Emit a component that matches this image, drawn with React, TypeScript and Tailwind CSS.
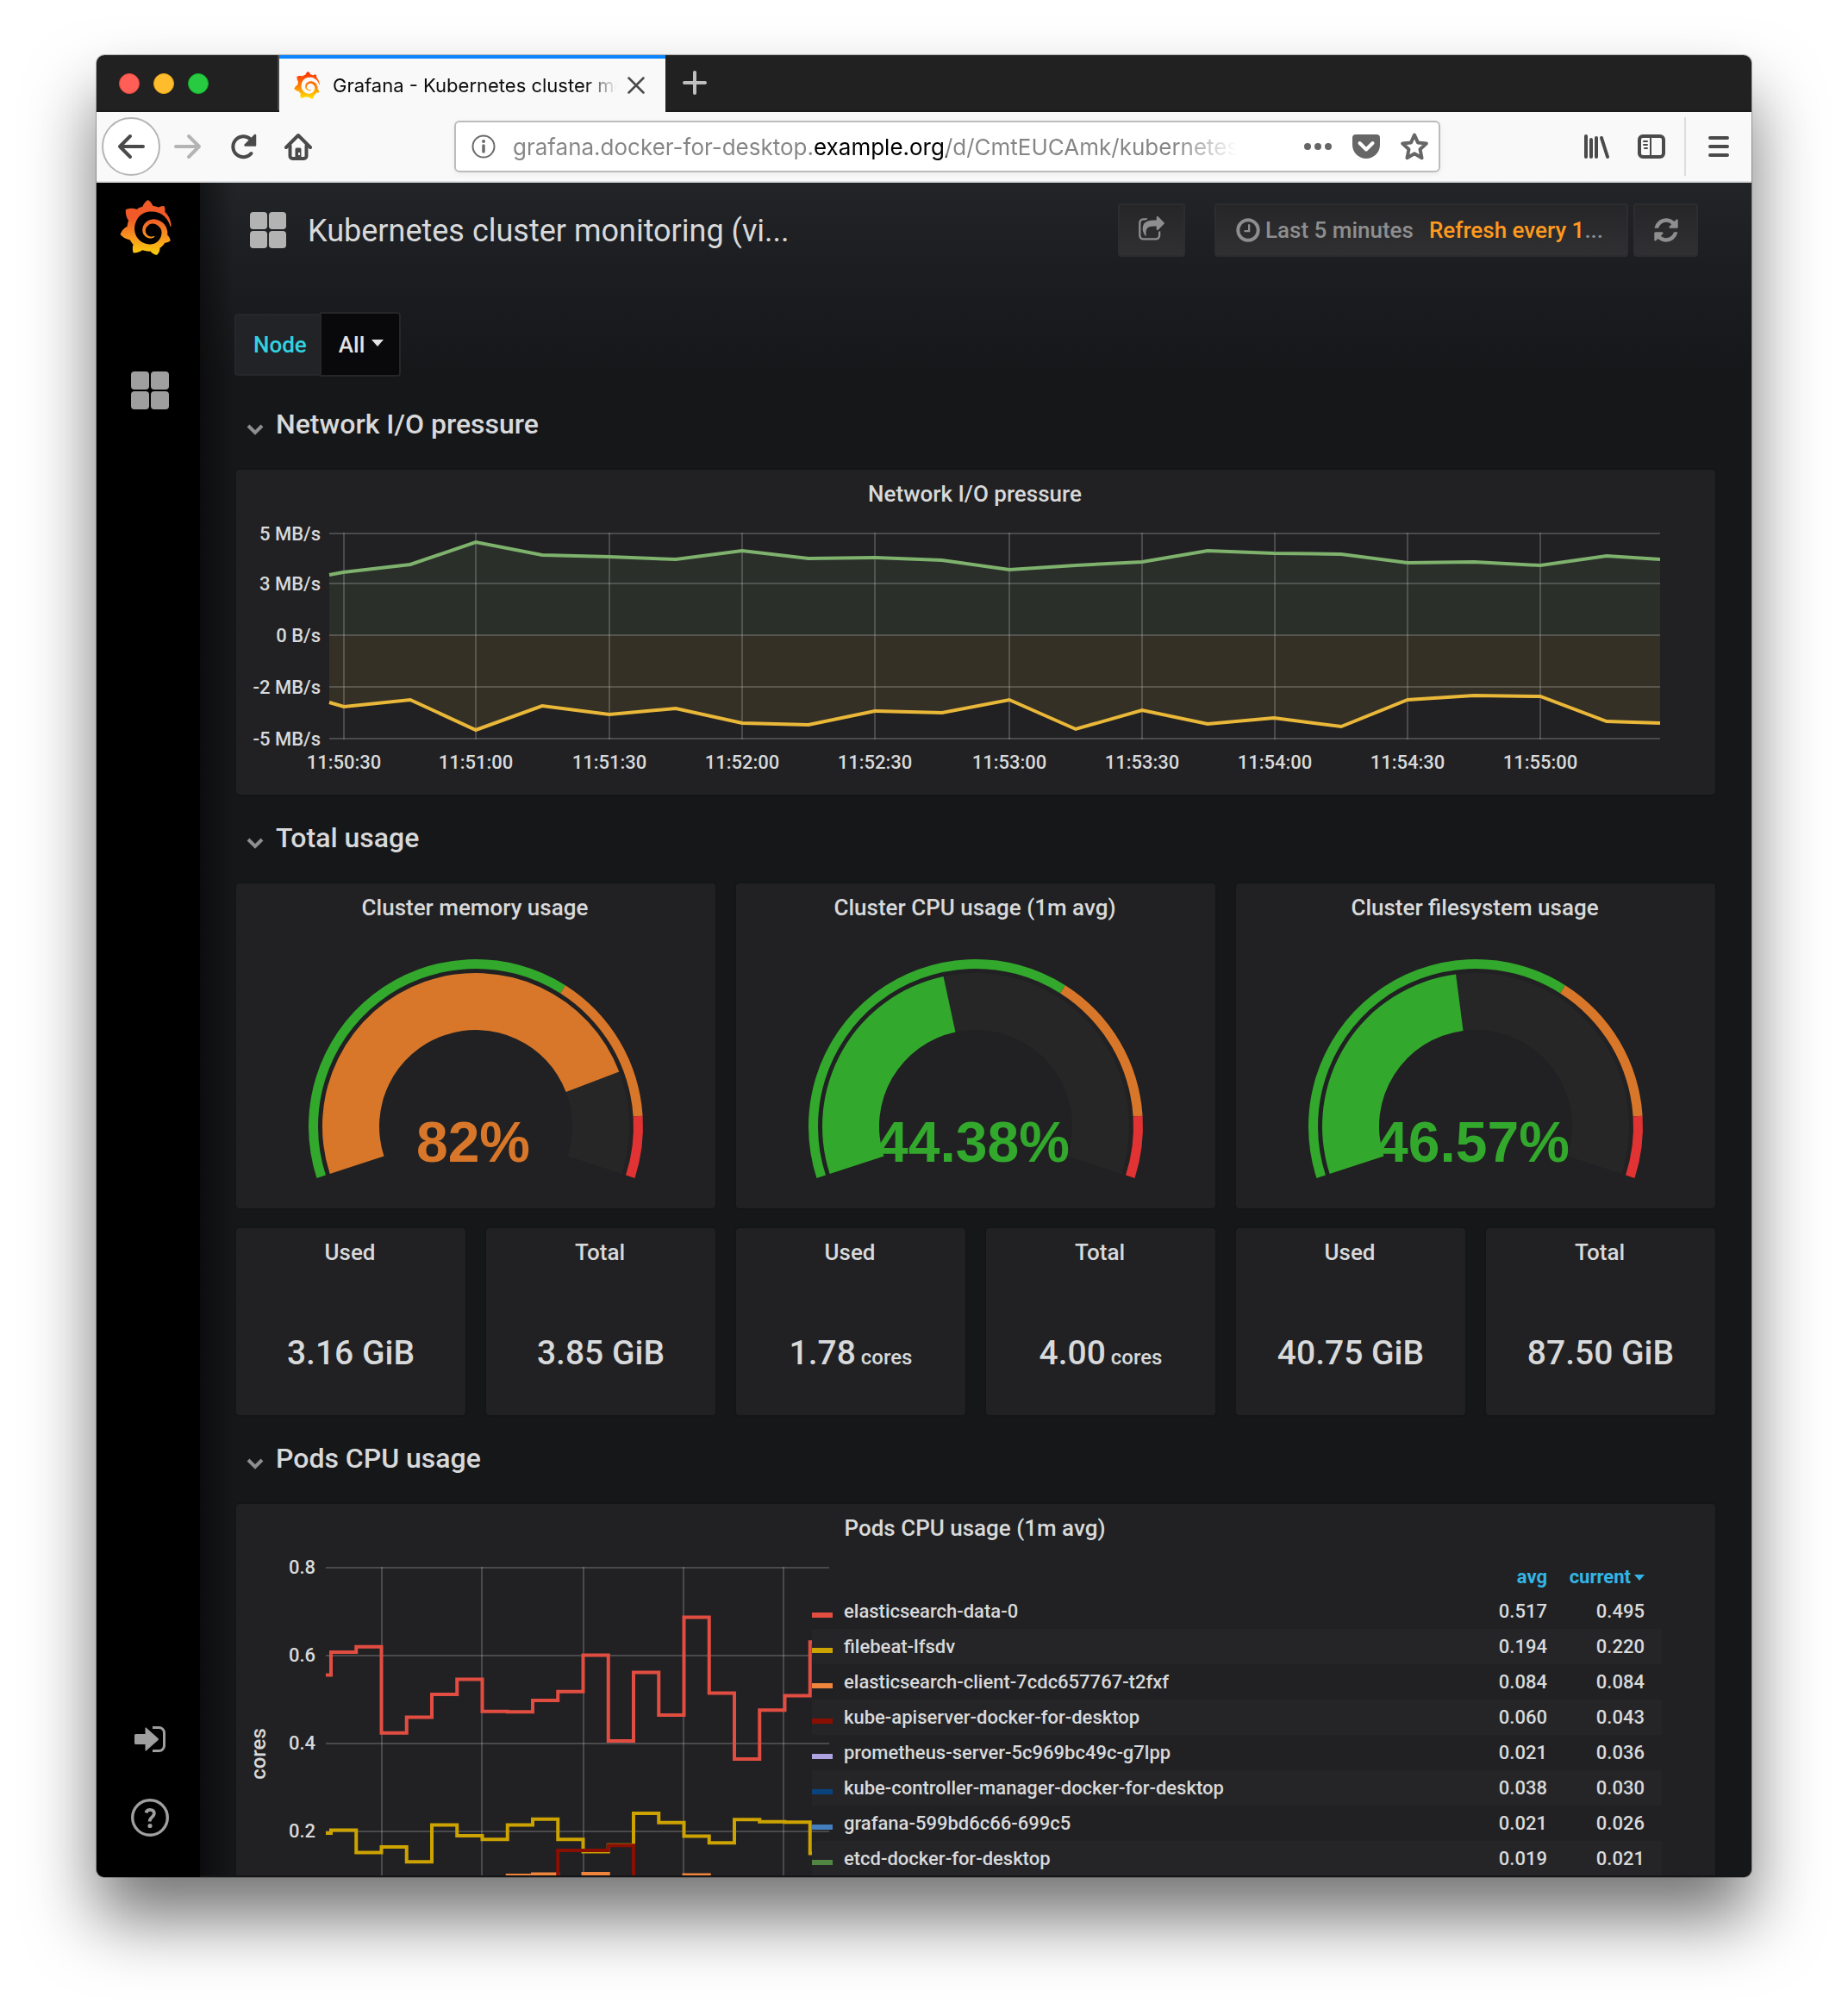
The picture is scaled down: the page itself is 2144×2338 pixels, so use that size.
import React from 'react';
import { SiGrafana } from 'react-icons/si';

const FONT = "font-['Roboto','Liberation_Sans',sans-serif]";

/* ---------- shared drawings ---------- */

function GrafanaLogo({ id, stops, className }: { id: string; stops: string[]; className: string }) {
  return (
    <span className="flex">
      <svg width="0" height="0" aria-hidden="true">
        <defs>
          <linearGradient id={id} x1="0" y1="0" x2="0" y2="1">
            {stops.map((c, i) => (
              <stop key={i} offset={i / (stops.length - 1)} stopColor={c} />
            ))}
          </linearGradient>
        </defs>
      </svg>
      <SiGrafana className={className} fill={`url(#${id})`} aria-hidden="true" />
    </span>
  );
}

function DashboardGrid({ className }: { className: string }) {
  return (
    <svg viewBox="0 0 44 44" className={className} fill="currentColor" aria-hidden="true">
      <rect x="0" y="0" width="21" height="21" rx="4" />
      <rect x="23" y="0" width="21" height="21" rx="4" />
      <rect x="0" y="23" width="21" height="21" rx="4" />
      <rect x="23" y="23" width="21" height="21" rx="4" />
    </svg>
  );
}

const ICONS = {
  refresh:
    'M1639 1056q0 5-1 7-64 268-268 434.5t-478 166.5q-146 0-282.5-55t-243.5-157l-129 129q-19 19-45 19t-45-19-19-45v-448q0-26 19-45t45-19h448q26 0 45 19t19 45-19 45l-137 137q71 66 161 102t187 36q134 0 250-65t186-179q11-17 53-117 8-23 30-23h192q13 0 22.5 9.5t9.5 22.5zm25-800v448q0 26-19 45t-45 19h-448q-26 0-45-19t-19-45 19-45l138-138q-148-137-349-137-134 0-250 65t-186 179q-11 17-53 117-8 23-30 23h-199q-13 0-22.5-9.5t-9.5-22.5v-7q65-268 270-434.5t480-166.5q146 0 284 55.5t245 156.5l130-129q19-19 45-19t45 19 19 45z',
  clock:
    'M1024 544v448q0 14-9 23t-23 9h-320q-14 0-23-9t-9-23v-64q0-14 9-23t23-9h224v-352q0-14 9-23t23-9h64q14 0 23 9t9 23zm416 352q0-148-73-273t-198-198-273-73-273 73-198 198-73 273 73 273 198 198 273 73 273-73 198-198 73-273zm224 0q0 209-103 385.5t-279.5 279.5-385.5 103-385.5-103-279.5-279.5-103-385.5 103-385.5 279.5-279.5 385.5-103 385.5 103 279.5 279.5 103 385.5z',
  share:
    'M1472 989v259q0 119-84.5 203.5t-203.5 84.5h-832q-119 0-203.5-84.5t-84.5-203.5v-832q0-119 84.5-203.5t203.5-84.5h255q13 0 22.5 9.5t9.5 22.5q0 27-26 32-77 26-133 60-10 4-16 4h-112q-66 0-113 47t-47 113v832q0 66 47 113t113 47h832q66 0 113-47t47-113v-214q0-19 18-29 28-13 54-37 16-16 35-8 21 9 21 29zm237-496l-384 384q-18 19-45 19-12 0-25-5-39-17-39-59v-192h-160q-323 0-438 131-119 137-74 473 3 23-20 34-8 2-12 2-16 0-26-13-10-14-21-31t-39.5-68.5-49.5-99.5-38.5-114-17.5-122q0-49 3.5-91t14-90 28-88 47-81.5 68.5-74 94.5-61.5 124.5-48.5 159.5-30.5 196.5-11h160v-192q0-42 39-59 13-5 25-5 26 0 45 19l384 384q19 19 19 45t-19 45z',
};

function Glyph({ name, className }: { name: keyof typeof ICONS; className: string }) {
  return (
    <svg viewBox="0 0 1792 1792" className={className} fill="currentColor" aria-hidden="true">
      <path d={ICONS[name]} />
    </svg>
  );
}

/* ---------- browser chrome ---------- */

function TabStrip() {
  return (
    <div className="flex h-[66px] shrink-0 border-b-2 border-[#1a1a1a] bg-[#212121]">
      <div className="flex w-[212px] items-center gap-4 border-r-2 border-[#4a4a4b] pl-[26px] pt-0.5">
        <button aria-label="Close window" className="size-6 rounded-full border border-[#e2463f] bg-[#ff5f57]" />
        <button aria-label="Minimize window" className="size-6 rounded-full border border-[#e1a116] bg-[#ffbd2e]" />
        <button aria-label="Zoom window" className="size-6 rounded-full border border-[#12ac28] bg-[#28ca42]" />
      </div>
      <div className="-mb-0.5 flex w-[448px] items-center border-t-4 border-[#0a84ff] bg-[#f9f9fa] pl-4 pr-6">
        <GrafanaLogo id="tabLogo" stops={['#ff2a05', '#ff7a00', '#ffe600']} className="size-8" />
        <span className="ml-3.5 mr-[9px] flex-1 overflow-hidden whitespace-nowrap font-['Inter',sans-serif] text-[22px] leading-8 text-[#0c0c0d] [mask-image:linear-gradient(to_right,black_88%,transparent_99%)]">
          Grafana - Kubernetes cluster mo
        </span>
        <button aria-label="Close tab">
          <svg viewBox="0 0 20 20" className="size-5" stroke="#4a4a4b" strokeWidth="2.5" strokeLinecap="round">
            <path d="M1.5 1.5 18.5 18.5M18.5 1.5 1.5 18.5" />
          </svg>
        </button>
      </div>
      <button aria-label="New tab" className="ml-5 flex w-7 items-center justify-center">
        <svg viewBox="0 0 28 28" className="size-7" stroke="#bfbfc0" strokeWidth="4" strokeLinecap="round">
          <path d="M14 2v24M2 14h24" />
        </svg>
      </button>
    </div>
  );
}

function ToolButton({ label, children }: { label: string; children: React.ReactNode }) {
  return (
    <button aria-label={label} className="flex h-[68px] w-16 shrink-0 items-center justify-center">
      {children}
    </button>
  );
}

function NavBar() {
  return (
    <div className="flex h-[82px] shrink-0 items-center border-b-2 border-[#dcdddf] bg-[#f9f9fa] pl-1.5 text-[#4a4a4b]">
      <button
        aria-label="Back"
        className="flex size-[68px] shrink-0 items-center justify-center rounded-full border-2 border-[#b5b5b6] bg-white"
      >
        <svg viewBox="0 0 32 32" className="size-8" fill="none" stroke="currentColor" strokeWidth="4" strokeLinecap="round" strokeLinejoin="round">
          <path d="M15 4 3 16l12 12M3 16h27" />
        </svg>
      </button>
      <ToolButton label="Forward">
        <svg viewBox="0 0 32 32" className="size-8" fill="none" stroke="#b4b4b5" strokeWidth="4" strokeLinecap="round" strokeLinejoin="round">
          <path d="M17 4l12 12-12 12M29 16H2" />
        </svg>
      </ToolButton>
      <ToolButton label="Reload">
        <svg viewBox="0 0 32 32" className="size-8" fill="none" stroke="currentColor" strokeWidth="4" strokeLinecap="round" strokeLinejoin="round">
          <path d="M25.5 24A12 12 0 1 1 24.5 7.5L28 11" />
          <path d="M30 3v11.500h-11.500z" fill="currentColor" strokeWidth="2.500" />
        </svg>
      </ToolButton>
      <ToolButton label="Home">
        <svg viewBox="0 0 32 32" className="size-8" fill="none" stroke="currentColor" strokeWidth="4" strokeLinecap="round" strokeLinejoin="round">
          <path d="M2 17 16 3l14 14" />
          <path d="M6.500 15v12a3 3 0 0 0 3 3h13a3 3 0 0 0 3-3V15" />
          <path d="M12.500 30V19a1.500 1.500 0 0 1 1.500-1.500h4a1.500 1.500 0 0 1 1.500 1.500V30z" fill="currentColor" stroke="none" />
          <rect x="16" y="23" width="2" height="3" fill="#f9f9fa" stroke="none" />
        </svg>
      </ToolButton>

      <div className="ml-[149px] mr-[149px] flex h-[60px] min-w-0 flex-1 items-center rounded-md border-2 border-[#bcbcbd] bg-white pl-[18px] pr-3 text-[#666667] shadow-[0_2px_6px_rgba(0,0,0,0.06)]">
        <button aria-label="Site information">
          <svg viewBox="0 0 28 28" className="size-7" fill="none" stroke="#6b6b6c" strokeWidth="2">
            <circle cx="14" cy="14" r="12.500" />
            <path d="M14 13v7" strokeWidth="3.500" strokeLinecap="round" />
            <circle cx="14" cy="8" r="2" fill="#6b6b6c" stroke="none" />
          </svg>
        </button>
        <input
          aria-label="Address"
          readOnly
          value="grafana.docker-for-desktop.example.org/d/CmtEUCAmk/kubernetes"
          className="ml-5 mr-[72px] h-14 min-w-0 flex-1 bg-[linear-gradient(to_right,#858585_348px,#000_348px,#000_503px,#858585_503px,#858585_770px,transparent_840px)] bg-clip-text font-['Inter',sans-serif] text-[26px] text-transparent outline-none"
        />
        <div className="flex items-center gap-6">
          <button aria-label="Page actions">
            <svg viewBox="0 0 32 32" className="size-8" fill="currentColor">
              <circle cx="4" cy="16" r="4" />
              <circle cx="16" cy="16" r="4" />
              <circle cx="28" cy="16" r="4" />
            </svg>
          </button>
          <button aria-label="Save to Pocket">
            <svg viewBox="0 0 32 32" className="size-8">
              <path d="M4 2h24a4 4 0 0 1 4 4v8a16 16 0 0 1-32 0V6a4 4 0 0 1 4-4z" fill="currentColor" />
              <path d="M8.500 12l7.500 7.500 7.500-7.500" fill="none" stroke="#fff" strokeWidth="4" strokeLinecap="round" strokeLinejoin="round" />
            </svg>
          </button>
          <button aria-label="Bookmark this page">
            <svg viewBox="0 0 32 32" className="size-8" fill="none" stroke="currentColor" strokeWidth="4" strokeLinejoin="round">
              <path d="M16 2.500l4 9 9.800 1-7.300 6.700 2 10L16 24.200l-8.500 5 2-10L2.200 12.500l9.800-1z" />
            </svg>
          </button>
        </div>
      </div>

      <ToolButton label="Library">
        <svg viewBox="0 0 32 32" className="size-8" fill="none" stroke="currentColor" strokeWidth="4" strokeLinecap="round">
          <path d="M4 4v24M10 8v20M16 6v22M22 6l7 22" />
        </svg>
      </ToolButton>
      <ToolButton label="Sidebars">
        <svg viewBox="0 0 32 32" className="size-8" fill="none" stroke="currentColor" strokeLinecap="round">
          <rect x="2" y="4" width="28" height="24" rx="4" strokeWidth="4" />
          <path d="M15 5v22M7 10h4M7 14h4M8 18h3" strokeWidth="2" />
        </svg>
      </ToolButton>
      <div className="ml-1.5 h-[68px] w-0.5 shrink-0 bg-[#dcdddf]" />
      <button aria-label="Open menu" className="flex h-[68px] w-[76px] shrink-0 items-center justify-center">
        <svg viewBox="0 0 24 24" className="size-6" stroke="currentColor" strokeWidth="4" strokeLinecap="round">
          <path d="M2 2h20M2 12h20M2 22h20" />
        </svg>
      </button>
    </div>
  );
}

/* ---------- Grafana side menu and header ---------- */

function SideMenu() {
  return (
    <nav className="flex w-[120px] shrink-0 flex-col items-center bg-black pb-[47px] pt-5 text-[#9f9f9f]">
      <a href="#home" aria-label="Grafana home" className="-ml-1.5">
        <GrafanaLogo id="menuLogo" stops={['#f05a28', '#f05a28', '#f7941e', '#fcd00b']} className="size-16" />
      </a>
      <a href="#dashboards" aria-label="Dashboards" className="ml-1 mt-[135px]">
        <DashboardGrid className="size-11" />
      </a>
      <div className="flex-1" />
      <a href="#login" aria-label="Sign in" className="ml-1">
        <svg viewBox="0 0 36 30" className="h-[30px] w-9">
          <path d="M1.500 9H12.500V2.500q0-2 1.500-.5L27.500 14q1 1 0 2L14 28q-1.500 1.500-1.500-.5V21H1.500Q0 21 0 19.500v-9Q0 9 1.500 9z" fill="currentColor" />
          <path d="M21 1.500h7.500a6 6 0 0 1 6 6v15a6 6 0 0 1-6 6H21" fill="none" stroke="currentColor" strokeWidth="3" />
        </svg>
      </a>
      <a href="#help" aria-label="Help" className="ml-1 mt-[54px]">
        <svg viewBox="0 0 44 44" className="size-11" fill="none" stroke="currentColor">
          <circle cx="22" cy="22" r="20.300" strokeWidth="3.400" />
          <path d="M17.500 16.500c.5-2.400 2.400-3.600 4.700-3.600 2.700 0 4.700 1.500 4.700 4.200 0 4.600-5.400 4-5.200 9.400" strokeWidth="3.800" />
          <circle cx="22" cy="31.500" r="2.600" fill="currentColor" stroke="none" />
        </svg>
      </a>
    </nav>
  );
}

function Toolbar() {
  const btn =
    'flex h-[62px] items-center justify-center rounded-sm border-2 border-[#2d2d30] bg-linear-to-b from-[#262628] to-[#303032] text-[#8e8e8e]';
  return (
    <header className="flex items-center pl-[58px] pr-[62px] pt-6">
      <DashboardGrid className="size-[42px] shrink-0 text-[#b3b3b3]" />
      <h1 className="ml-[25px] w-[560px] shrink-0 truncate pt-0.5 text-[36px] leading-[48px] text-[#d8d9da]">
        Kubernetes cluster monitoring (vi...
      </h1>
      <div className="ml-auto flex">
        <button aria-label="Share dashboard" className={`${btn} w-[78px]`}>
          <Glyph name="share" className="size-8" />
        </button>
        <button className={`${btn} ml-[34px] w-[480px] pr-1.5 text-[26px] font-medium leading-9`}>
          <Glyph name="clock" className="size-8" />
          <span className="ml-1">Last 5 minutes</span>
          <span className="ml-[18px] text-[#ff9a1f]">
            Refresh every 1<span className="text-[#8e8e8e]">...</span>
          </span>
        </button>
        <button aria-label="Refresh dashboard" className={`${btn} ml-1.5 w-[75px]`}>
          <Glyph name="refresh" className="size-8" />
        </button>
      </div>
    </header>
  );
}

function Variables() {
  return (
    <div className="mt-16 flex items-center pl-10 text-[26px] font-medium leading-9">
      <label
        htmlFor="node"
        className="flex h-[72px] items-center rounded-l-sm border-2 border-r-0 border-[#25272a] bg-[#212326] pl-5 pr-[15px] text-[#33d2e0]"
      >
        Node
      </label>
      <div className="relative">
        <select
          id="node"
          className="h-[75px] w-[94px] appearance-none rounded-r-sm border-2 border-[#262628] bg-[#09090b] pl-5 pr-8 font-medium text-[#e3e3e3] outline-none"
        >
          <option>All</option>
        </select>
        <span className="pointer-events-none absolute right-5 top-8 border-x-[7px] border-t-8 border-x-transparent border-t-[#e3e3e3]" />
      </div>
    </div>
  );
}

/* ---------- dashboard pieces ---------- */

function RowTitle({ children }: { children: React.ReactNode }) {
  return (
    <h2 className="h-[103px] pt-[30px] text-[32px] font-medium leading-10 text-[#d8d9da]">
      <button className="flex items-center pl-3">
        <svg viewBox="0 0 20 14" className="mt-3.5 h-3.5 w-5" fill="none" stroke="#8e8e8e" strokeWidth="4">
          <path d="M2 2l8 8 8-8" />
        </svg>
        <span className="ml-3.5">{children}</span>
      </button>
    </h2>
  );
}

function Panel({ title, className, children }: { title: string; className: string; children: React.ReactNode }) {
  return (
    <section className={`flex flex-col rounded-sm bg-[#212123] shadow-[0_0_0_2px_#141517] ${className}`}>
      <h3 className="h-12 shrink-0 pr-0.5 pt-2.5 text-center text-[26px] font-medium leading-9 text-[#d8d9da]">{title}</h3>
      {children}
    </section>
  );
}

const NET_IN = [
  [108, 122], [124, 119], [202, 110], [278, 84], [355, 99], [433, 101], [510, 104], [587, 94], [664, 103], [741, 102],
  [819, 105], [897, 116], [974, 111], [1051, 107], [1127, 94], [1204, 97], [1282, 98], [1359, 108], [1436, 107],
  [1513, 111], [1590, 100], [1652, 104],
];
const NET_OUT = [
  [108, 270], [125, 275], [202, 267], [278, 302], [355, 274], [433, 284], [510, 277], [587, 294], [664, 296],
  [741, 280], [819, 282], [897, 267], [974, 301], [1051, 279], [1127, 295], [1204, 288], [1282, 298], [1359, 267],
  [1436, 262], [1513, 263], [1590, 292], [1652, 294],
];
const NET_Y: [number, string][] = [
  [74, '5 MB/s'], [132, '3 MB/s'], [192, '0 B/s'], [252, '-2 MB/s'], [312, '-5 MB/s'],
];
const NET_X: [number, string][] = [
  [125, '11:50:30'], [278, '11:51:00'], [433, '11:51:30'], [587, '11:52:00'], [741, '11:52:30'],
  [897, '11:53:00'], [1051, '11:53:30'], [1205, '11:54:00'], [1359, '11:54:30'], [1513, '11:55:00'],
];
const toPoints = (p: number[][]) => p.map((q) => q.join(',')).join(' ');

function NetworkChart() {
  return (
    <svg viewBox="0 48 1716 329" className="w-full" role="img" aria-label="Network I/O pressure">
      <polygon points={`108,192 ${toPoints(NET_IN)} 1652,192`} fill="#7eb26d" fillOpacity="0.1" />
      <polygon points={`108,192 ${toPoints(NET_OUT)} 1652,192`} fill="#eab839" fillOpacity="0.1" />
      <g stroke="#c8c8c8" strokeOpacity="0.25" strokeWidth="2">
        {NET_Y.map(([y]) => (
          <path key={y} d={`M108 ${y}H1652`} />
        ))}
        {NET_X.map(([x]) => (
          <path key={x} d={`M${x} 73V313`} />
        ))}
      </g>
      <polyline points={toPoints(NET_IN)} fill="none" stroke="#7eb26d" strokeWidth="4" />
      <polyline points={toPoints(NET_OUT)} fill="none" stroke="#eab839" strokeWidth="4" />
      <g fill="#d8d9da" fontSize="22" fontWeight="500">
        {NET_Y.map(([y, t]) => (
          <text key={t} x="98" y={y + 8} textAnchor="end">{t}</text>
        ))}
        {NET_X.map(([x, t]) => (
          <text key={t} x={x} y="347" textAnchor="middle">{t}</text>
        ))}
      </g>
    </svg>
  );
}

const GREEN = '#32a82c';
const ORANGE = '#d87729';
const RED = '#e23334';

function ring(from: number, to: number, outer: number, inner: number) {
  const at = (f: number, r: number) => {
    const a = ((198 - 216 * f) * Math.PI) / 180;
    return `${(278 + r * Math.cos(a)).toFixed(2)} ${(282 - r * Math.sin(a)).toFixed(2)}`;
  };
  const large = (to - from) * 216 > 180 ? 1 : 0;
  return `M${at(from, outer)}A${outer} ${outer} 0 ${large} 1 ${at(to, outer)}L${at(to, inner)}A${inner} ${inner} 0 ${large} 0 ${at(from, inner)}Z`;
}

function Gauge({ value, label, color }: { value: number; label: string; color: string }) {
  return (
    <svg viewBox="0 48 556 329" className="w-full" role="img" aria-label={label}>
      <path d={ring(0, 1, 178, 112)} fill="#262626" />
      <path d={ring(0, value / 100, 178, 112)} fill={color} />
      <path d={ring(0, 0.65, 194, 183)} fill={GREEN} />
      <path d={ring(0.65, 0.9, 194, 183)} fill={ORANGE} />
      <path d={ring(0.9, 1, 194, 183)} fill={RED} />
      <text x="275" y="323" textAnchor="middle" fontSize="66" fontWeight="700" fill={color} className="font-['Liberation_Sans',sans-serif]">
        {label}
      </text>
    </svg>
  );
}

function Stat({ title, value, unit }: { title: string; value: string; unit?: string }) {
  return (
    <Panel title={title} className="h-[217px]">
      <p className="pt-[69px] text-center text-[39px] font-medium leading-[56px] text-[#d8d9da]">
        {value}
        {unit && <span className="text-[24px]"> {unit}</span>}
      </p>
    </Panel>
  );
}

const CPU_ES = [
  0.556, 0.608, 0.62, 0.424, 0.46, 0.512, 0.546, 0.473, 0.472, 0.498, 0.518, 0.601, 0.406, 0.562, 0.465, 0.687, 0.515,
  0.365, 0.476, 0.509, 0.631,
];
const CPU_FILEBEAT = [
  0.196, 0.203, 0.152, 0.165, 0.131, 0.215, 0.19, 0.182, 0.215, 0.228, 0.182, 0.154, 0.169, 0.241, 0.22, 0.189, 0.174,
  0.227, 0.222, 0.221, 0.15,
];
const CPU_CLIENT = [
  0.084, 0.084, 0.084, 0.084, 0.084, 0.084, 0.084, 0.084, 0.1, 0.103, 0.084, 0.104, 0.084, 0.084, 0.084, 0.101, 0.084,
  0.084, 0.084, 0.084, 0.084,
];
const CPU_API = [
  0.06, 0.06, 0.06, 0.06, 0.06, 0.06, 0.06, 0.06, 0.06, 0.06, 0.157, 0.157, 0.168, 0.06, 0.06, 0.06, 0.06, 0.06, 0.06,
  0.06, 0.06,
];

/* 510 units per core, 0.8 at the top gridline */
const cpuY = (v: number) => 74 + (0.8 - v) * 510;

function stepPath(values: number[]) {
  return values
    .map((v, i) => {
      const start = i === 0 ? 104 : 110 + 29.25 * (i - 1);
      const end = i === values.length - 1 ? 668 : 110 + 29.25 * i;
      return `${i === 0 ? 'M' : 'L'}${start} ${cpuY(v).toFixed(1)}H${end}`;
    })
    .join('');
}

function CpuChart() {
  return (
    <svg viewBox="0 48 668 450" className="w-full overflow-visible" role="img" aria-label="Pods CPU usage">
      <defs>
        <clipPath id="cpuPlot">
          <rect x="104" y="60" width="564" height="430" />
        </clipPath>
      </defs>
      <g stroke="#c8c8c8" strokeOpacity="0.25" strokeWidth="2">
        {[0.8, 0.6, 0.4, 0.2].map((v) => (
          <path key={v} d={`M104 ${Math.round(cpuY(v))}H688`} />
        ))}
        {[169, 285, 403, 519, 635].map((x) => (
          <path key={x} d={`M${x} 73V482`} />
        ))}
      </g>
      <g fill="none" strokeWidth="4" clipPath="url(#cpuPlot)">
        <path d={stepPath(CPU_ES)} stroke="#e24d42" />
        <path d={stepPath(CPU_FILEBEAT)} stroke="#cca300" />
        <path d={stepPath(CPU_CLIENT)} stroke="#ef843c" />
        <path d={stepPath(CPU_API)} stroke="#890f02" />
      </g>
      <g fill="#d8d9da" fontSize="22" fontWeight="500">
        {[0.8, 0.6, 0.4, 0.2].map((v) => (
          <text key={v} x="92" y={Math.round(cpuY(v)) + 7} textAnchor="end">{v}</text>
        ))}
        <text transform="translate(34 290) rotate(-90)" textAnchor="middle" fontSize="24">cores</text>
      </g>
    </svg>
  );
}

const PODS: [string, string, string, string][] = [
  ['elasticsearch-data-0', '0.517', '0.495', 'bg-[#e24d42]'],
  ['filebeat-lfsdv', '0.194', '0.220', 'bg-[#cca300]'],
  ['elasticsearch-client-7cdc657767-t2fxf', '0.084', '0.084', 'bg-[#ef843c]'],
  ['kube-apiserver-docker-for-desktop', '0.060', '0.043', 'bg-[#890f02]'],
  ['prometheus-server-5c969bc49c-g7lpp', '0.021', '0.036', 'bg-[#aea2e0]'],
  ['kube-controller-manager-docker-for-desktop', '0.038', '0.030', 'bg-[#0a437c]'],
  ['grafana-599bd6c66-699c5', '0.021', '0.026', 'bg-[#447ebc]'],
  ['etcd-docker-for-desktop', '0.019', '0.021', 'bg-[#508642]'],
];

function PodLegend() {
  return (
    <table className="relative mt-4 w-full text-[22px] font-medium leading-8 text-[#d8d9da]">
      <thead>
        <tr className="h-10 text-[#33b5e5]">
          <th colSpan={2} aria-label="Pod" />
          <th className="p-0 pt-0.5 text-right font-bold">
            <button>avg</button>
          </th>
          <th className="w-[133px] p-0 pr-5 pt-0.5 text-right font-bold">
            <button className="inline-flex items-center gap-1">
              current
              <span className="border-x-[6px] border-t-[7px] border-x-transparent border-t-[#33b5e5]" />
            </button>
          </th>
        </tr>
      </thead>
      <tbody>
        {PODS.map(([name, avg, current, swatch]) => (
          <tr key={name} className="h-[41px] even:bg-[#252528]">
            <td className="w-[37px] p-0">
              <span className={`mt-2 block h-1.5 w-6 ${swatch}`} />
            </td>
            <td className="p-0">{name}</td>
            <td className="p-0 text-right">{avg}</td>
            <td className="p-0 pr-5 text-right">{current}</td>
          </tr>
        ))}
      </tbody>
    </table>
  );
}

/* ---------- page ---------- */

export default function App() {
  return (
    <div className="flex h-screen flex-col bg-white px-28 pb-40 pt-16">
      <div className="flex min-h-0 flex-1 flex-col overflow-hidden rounded-[9px] shadow-[0_0_0_1px_rgba(0,0,0,0.25),0_48px_80px_rgba(0,0,0,0.55)]">
        <TabStrip />
        <NavBar />
        <div className={`flex min-h-0 flex-1 bg-[#161719] ${FONT}`}>
          <SideMenu />
          <main className="min-w-0 flex-1 overflow-hidden border-b-2 border-[#141517] bg-[linear-gradient(to_right,rgba(0,0,0,0.45),transparent_40px),linear-gradient(to_bottom,#222427,#1d1e21_90px,#161719_220px)]">
            <Toolbar />
            <Variables />
            <div className="px-[42px] pt-[5px]">
              <RowTitle>Network I/O pressure</RowTitle>
              <Panel title="Network I/O pressure" className="min-h-[377px]">
                <NetworkChart />
              </Panel>

              <RowTitle>Total usage</RowTitle>
              <div className="grid grid-cols-3 gap-6">
                <Panel title="Cluster memory usage" className="min-h-[377px]">
                  <Gauge value={82} label="82%" color={ORANGE} />
                </Panel>
                <Panel title="Cluster CPU usage (1m avg)" className="min-h-[377px]">
                  <Gauge value={44.38} label="44.38%" color={GREEN} />
                </Panel>
                <Panel title="Cluster filesystem usage" className="min-h-[377px]">
                  <Gauge value={46.57} label="46.57%" color={GREEN} />
                </Panel>
              </div>
              <div className="mt-[23px] grid grid-cols-6 gap-6">
                <Stat title="Used" value="3.16 GiB" />
                <Stat title="Total" value="3.85 GiB" />
                <Stat title="Used" value="1.78" unit="cores" />
                <Stat title="Total" value="4.00" unit="cores" />
                <Stat title="Used" value="40.75 GiB" />
                <Stat title="Total" value="87.50 GiB" />
              </div>

              <RowTitle>Pods CPU usage</RowTitle>
              <Panel title="Pods CPU usage (1m avg)" className="min-h-[377px]">
                <div className="flex items-start pr-[62px]">
                  <div className="min-w-0 flex-[668]">
                    <CpuChart />
                  </div>
                  <div className="min-w-0 flex-[986]">
                    <PodLegend />
                  </div>
                </div>
              </Panel>
            </div>
          </main>
        </div>
      </div>
    </div>
  );
}
